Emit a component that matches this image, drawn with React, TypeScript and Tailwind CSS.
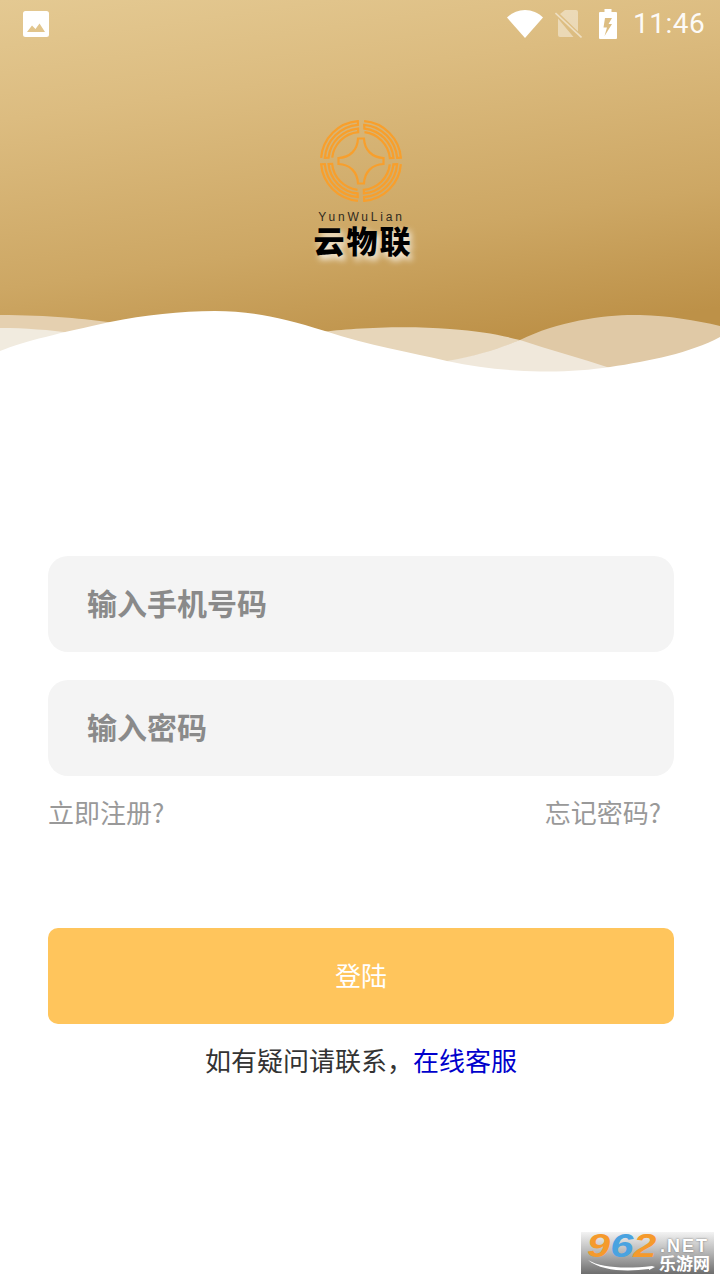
const cjk = "font-['Noto_Sans_CJK_SC','Noto_Sans',sans-serif]";

function ImageIcon() {
  return (
    <svg width="26" height="26" viewBox="0 0 26 26">
      <path fillRule="evenodd" fill="#fff" d="M2.500 0h21A2.500 2.500 0 0 1 26 2.500v21a2.500 2.500 0 0 1-2.500 2.500h-21A2.500 2.500 0 0 1 0 23.500v-21A2.500 2.500 0 0 1 2.500 0zM4 21h18L16.500 12.500 12.500 18 9 14.500z" />
    </svg>
  );
}

function StatusIcons() {
  return (
    <div className="flex items-center">
      <svg width="36" height="28" viewBox="0 0 36 28">
        <path fill="#fff" d="M0 7.500C5 2.800 11 0 18 0s13 2.800 18 7.500L18 28z" />
      </svg>
      <svg width="27" height="28" viewBox="0 0 27 28" className="ml-[12px]">
        <path fill="#fff" fillOpacity="0.42" d="M10 0h11a2 2 0 0 1 2 2v19.500L5 4zM3 8.500L18.500 27H5a2 2 0 0 1-2-2z" />
        <path stroke="#fff" strokeOpacity="0.5" strokeWidth="1.600" d="M0.500 3L26.500 27.500" />
      </svg>
      <svg width="18" height="30" viewBox="0 0 18 30" className="ml-[17px]">
        <path fill="#fff" fillRule="evenodd" d="M5.500 0h7v3H17a1 1 0 0 1 1 1v25a1 1 0 0 1-1 1H1a1 1 0 0 1-1-1V4a1 1 0 0 1 1-1h4.500zM6 9L4.500 18.500H8L5.500 27l7.500-12H9.500L13 9z" />
      </svg>
      <span className="ml-[16px] w-[72px] font-['Roboto',sans-serif] text-[28px] leading-[30px] tracking-[0.5px] text-white/95">11:46</span>
    </div>
  );
}

function quadrantPath() {
  const radii = [40, 36.300, 32.600, 29];
  const ax = 4.500;
  const ay = 1.800;
  const p = (r: number, t: number) => `${(r * Math.sin(t)).toFixed(2)} ${(-r * Math.cos(t)).toFixed(2)}`;
  let d = "";
  radii.forEach((r, i) => {
    const s = ax / r;
    const e = Math.PI / 2 - ay / r;
    const from = i % 2 === 0 ? s : e;
    const to = i % 2 === 0 ? e : s;
    d += `${i === 0 ? "M" : "L"}${p(r, from)}A${r} ${r} 0 0 ${i % 2 === 0 ? 1 : 0} ${p(r, to)}`;
  });
  return d;
}

function Logo() {
  const d = quadrantPath();
  return (
    <svg width="84" height="84" viewBox="-42 -42 84 84" fill="none" stroke="#f89f2c" strokeWidth="2.200">
      <g transform="rotate(-2)">
        {[0, 90, 180, 270].map((q) => (
          <path key={q} d={d} transform={`rotate(${q})`} />
        ))}
      </g>
      <path strokeWidth="2.200" d="M-3-22.500h6C3.500-11 11-3.500 22.500-3v6C11 3.500 3.500 11 3 22.500h-6C-3.500 11-11 3.500-22.500 3v-6C-11-3.500-3.500-11-3-22.500z" />
    </svg>
  );
}

function Waves() {
  return (
    <svg className="absolute left-0 top-[300px] h-[80px] w-[720px]" viewBox="0 300 720 80" preserveAspectRatio="none">
      <path fill="#e5d0b0" d="M0 315C50 315 85 319 115 323L115 380H0z" />
      <path fill="#f1ebdf" d="M0 328C25 328 50 330 72 333L0 360z" />
      <path fill="#e7d6ba" d="M322 332C345 329 400 325 450 329C480 331 500 335 520 340C495 352 470 358 447 362L322 350z" />
      <path fill="#e0c9a6" d="M447 362C480 355 500 348 520 340C560 320 610 314 640 315C670 316 695 320 720 326V345L610 372z" />
      <path fill="#f0e8db" d="M447 361C480 355 500 348 520 340C550 350 580 358 610 368L560 375H470z" />
      <path
        fill="#fff"
        d="M0 351C25 341 60 333 110 322C145 315 180 311 215 311C250 311 280 317 325 331C370 346 410 352 447 361C480 368 510 371 540 371.500C565 372 590 370 610 367C650 361 690 353 720 337V380H0z"
      />
    </svg>
  );
}

function Watermark() {
  return (
    <div className="absolute left-[581px] top-[1232px] h-[42px] w-[133px] overflow-hidden bg-gradient-to-b from-[#f3f3f3] via-[#b5b5b5] to-[#6e6e6e]">
      <span className="absolute left-[6px] top-0 origin-left scale-x-[1.26] font-['Liberation_Sans',sans-serif] text-[33px] font-bold italic leading-[27px] text-[#f59a2c]">
        9<span className="text-[#4aa3e0]">6</span>2
      </span>
      <span className="absolute left-[79px] top-[4px] font-['Liberation_Sans',sans-serif] text-[18px] font-bold leading-[20px] tracking-[2px] text-white [text-shadow:0_0_2px_#666]">.NET</span>
      <span className={`absolute left-[78px] top-[21px] ${cjk} text-[17px] font-bold leading-[20px] text-white`}>乐游网</span>
      <svg className="absolute left-[5px] top-[27px]" width="70" height="14" viewBox="0 0 70 14">
        <path fill="#fff" d="M2 1C15 9 40 10 66 7l3 1-6 3v-1C40 13 15 12 2 1z" />
      </svg>
    </div>
  );
}

export default function App() {
  return (
    <div className={`relative h-[1280px] w-[720px] overflow-hidden bg-white ${cjk}`}>
      <header className="relative h-[380px] bg-[linear-gradient(172deg,#e4c992_0%,#dcbc80_25%,#cda764_60%,#bd9148_85%)]">
        <Waves />
        <div className="relative flex h-[48px] items-center justify-between pl-[23px] pr-[15px]">
          <ImageIcon />
          <StatusIcons />
        </div>
        <div className="relative mt-[71px] flex flex-col items-center">
          <div className="ml-[2px]">
            <Logo />
          </div>
          <span className="ml-[3px] mt-[7px] font-['Liberation_Sans',sans-serif] text-[12px] leading-[14px] tracking-[2.800px] text-[#2f2a20]">YunWuLian</span>
          <span className="ml-[6px] mt-0 text-[31px] font-black leading-[32px] tracking-[2px] text-black [text-shadow:3px_4px_6px_rgba(255,255,255,0.9)]">云物联</span>
        </div>
      </header>

      <main className="mx-[48px] w-[626px] pt-[176px]">
        <div className="flex h-[96px] items-center rounded-[20px] bg-[#f4f4f4] pb-[4px] pl-[39px] text-[30px] font-bold text-[#8a8a8a]">输入手机号码</div>
        <div className="mt-[28px] flex h-[96px] items-center rounded-[20px] bg-[#f4f4f4] pb-[4px] pl-[39px] text-[30px] font-bold text-[#8a8a8a]">输入密码</div>
        <div className="mt-[18px] flex h-[36px] items-center justify-between pr-[13px] text-[26px] leading-[36px] text-[#999999]">
          <span>立即注册?</span>
          <span>忘记密码?</span>
        </div>
        <button className="mt-[98px] flex h-[96px] w-full items-center justify-center rounded-[10px] bg-[#ffc55c] pb-[4px] text-[26px] text-white">登陆</button>
        <p className="mt-[18px] text-center text-[26px] leading-[36px] text-[#333333]">
          如有疑问请联系，<span className="text-[#0000cc]">在线客服</span>
        </p>
      </main>
      <Watermark />
    </div>
  );
}
